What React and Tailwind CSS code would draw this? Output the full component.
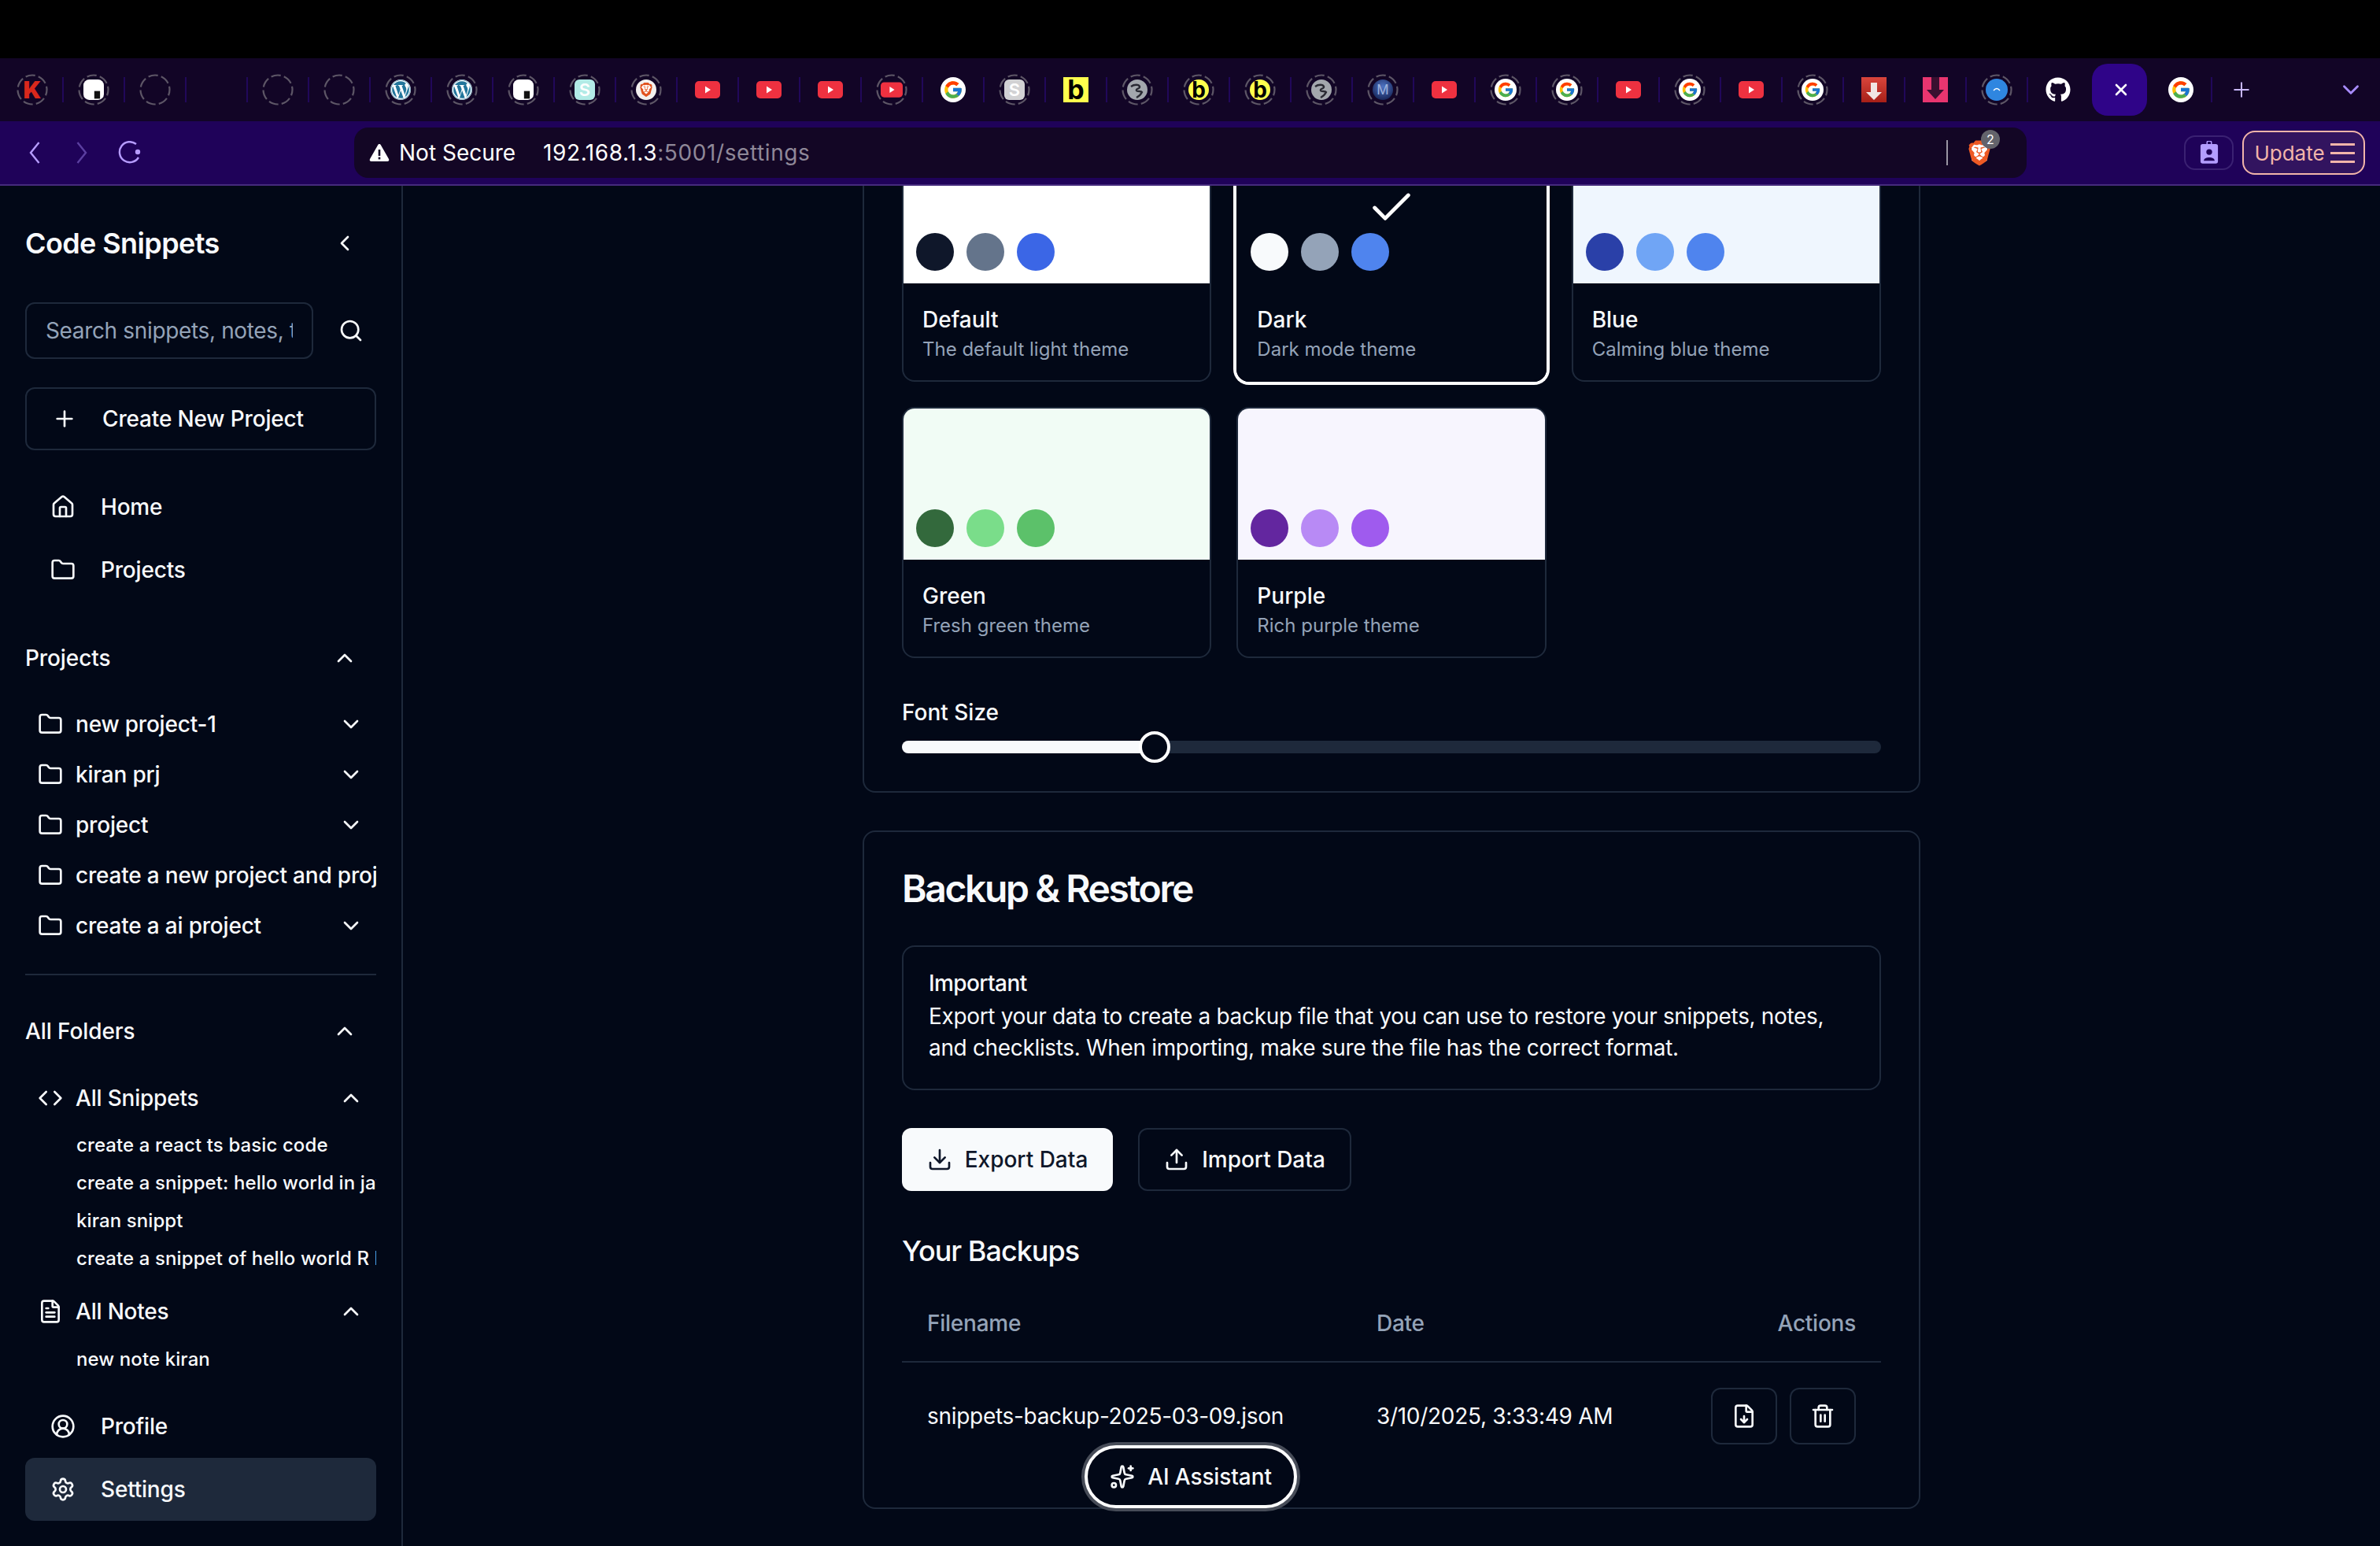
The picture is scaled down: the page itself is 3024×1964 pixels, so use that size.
import React from "react";
import {
  Check, ChevronDown, ChevronLeft, ChevronUp, CircleUserRound, Code, Download, FileDown,
  FileText, Folder, House, Plus, Search, Settings, Sparkles, Trash2, Upload, X,
} from "lucide-react";
import { FaGithub, FaWordpress } from "react-icons/fa";
import { FcGoogle } from "react-icons/fc";
import { SiBrave } from "react-icons/si";

const Ring = () => (
  <svg viewBox="0 0 40 40" className="absolute left-1/2 top-1/2 h-10 w-10 -translate-x-1/2 -translate-y-1/2">
    <circle cx="20" cy="20" r="18.5" fill="none" stroke="#5d5666" strokeWidth="2.2" strokeDasharray="12.4 4.2" strokeDashoffset="5" />
  </svg>
);

const Box = () => (
  <svg viewBox="0 0 32 32" className="h-[26px] w-[26px]">
    <rect x="0" y="0" width="32" height="32" rx="9" fill="#fff" />
    <rect x="17" y="18" width="9" height="12" fill="#111" />
  </svg>
);

const Letter = ({ cls, children }) => (
  <span className={`flex h-[26px] w-[26px] items-center justify-center leading-none ${cls}`}>{children}</span>
);

const Wp = () => (
  <span className="flex h-[26px] w-[26px] items-center justify-center rounded-full bg-white">
    <FaWordpress className="h-[26px] w-[26px] text-[#21759b]" />
  </span>
);

const Yt = ({ small }) => (
  <svg viewBox="0 0 32 32" className={small ? "h-[28px] w-[28px]" : "h-8 w-8"}>
    <rect x="0" y="5" width="32" height="22" rx="5" fill="#ee3140" />
    <path d="M13 11.5 L20 16 L13 20.5 Z" fill="#fff" />
  </svg>
);

const Goog = ({ small }) => (
  <span className={`flex items-center justify-center rounded-full bg-white ${small ? "h-[28px] w-[28px]" : "h-8 w-8"}`}>
    <FcGoogle className={small ? "h-[22px] w-[22px]" : "h-[26px] w-[26px]"} />
  </span>
);

const Globe = () => (
  <svg viewBox="0 0 26 26" className="h-[26px] w-[26px]">
    <circle cx="13" cy="13" r="13" fill="#a3a7ad" />
    <path d="M5 9 C9 6 15 6 16 9 C17 12 11 11 12 14 C13 16 18 14 19 16 C17 20 14 22 12 23" fill="none" stroke="#2a2a33" strokeWidth="2.4" />
  </svg>
);

const RedArrow = () => (
  <span className="flex h-8 w-8 items-center justify-center bg-gradient-to-b from-[#d9453c] to-[#a61f17]">
    <svg viewBox="0 0 32 32" className="h-8 w-8">
      <path d="M12 7 H20 V19 H26 L16 29 L6 19 H12 Z" fill="#f1e6e3" />
    </svg>
  </span>
);

const PinkArrow = () => (
  <svg viewBox="0 0 32 32" className="h-8 w-8">
    <rect width="32" height="32" fill="#e8356f" />
    <path d="M11 0 H21 V16 H27 L16 28 L5 16 H11 Z" fill="#3a1030" />
  </svg>
);

const Blue = () => (
  <svg viewBox="0 0 28 28" className="h-7 w-7">
    <circle cx="14" cy="14" r="14" fill="#2f86e0" />
    <path d="M10 15 Q14 10 18 15" fill="none" stroke="#fff" strokeWidth="1.4" />
  </svg>
);

const Lion = ({ cls }) => (
  <span className="relative flex items-center justify-center">
    <span className="absolute inset-[18%] rounded-[3px] bg-white" />
    <SiBrave className={`relative ${cls}`} />
  </span>
);

const tabs = [
  { ring: true, icon: <Letter cls="text-[30px] font-black text-[#d9281c]">K</Letter> },
  { ring: true, icon: <Box /> },
  { ring: true },
  {},
  { ring: true },
  { ring: true },
  { ring: true, icon: <Wp /> },
  { ring: true, icon: <Wp /> },
  { ring: true, icon: <Box /> },
  { ring: true, icon: <Letter cls="rounded-md bg-[#b2ebe6] text-[22px] font-semibold text-white">S</Letter> },
  { ring: true, icon: <Letter cls="rounded-full bg-[#f3f1ef]"><Lion cls="h-[18px] w-[18px] text-[#e2531f]" /></Letter> },
  { icon: <Yt /> },
  { icon: <Yt /> },
  { icon: <Yt /> },
  { ring: true, icon: <Yt small /> },
  { icon: <Goog /> },
  { ring: true, icon: <Letter cls="rounded-md bg-[#d2d2d4] text-[22px] font-semibold text-white">S</Letter> },
  { icon: <span className="flex h-8 w-8 items-center justify-center bg-[#ffff4d] text-[34px] font-bold leading-none text-black">b</span> },
  { ring: true, icon: <Globe /> },
  { ring: true, icon: <Letter cls="rounded-full bg-[#ffff4d] text-[28px] font-bold text-black">b</Letter> },
  { ring: true, icon: <Letter cls="rounded-full bg-[#ffff4d] text-[28px] font-bold text-black">b</Letter> },
  { ring: true, icon: <Globe /> },
  { ring: true, icon: <Letter cls="rounded-full bg-[radial-gradient(circle_at_50%_35%,#4f74c4,#0a1440)] text-[17px] text-[#9db2dd]">M</Letter> },
  { icon: <Yt /> },
  { ring: true, icon: <Goog small /> },
  { ring: true, icon: <Goog small /> },
  { icon: <Yt /> },
  { ring: true, icon: <Goog small /> },
  { icon: <Yt /> },
  { ring: true, icon: <Goog small /> },
  { icon: <RedArrow /> },
  { icon: <PinkArrow /> },
  { ring: true, icon: <Blue /> },
  { noSep: true, icon: <FaGithub className="h-8 w-8 text-white" /> },
  { noSep: true, active: true },
  { icon: <Goog /> },
];

const TabBar = () => (
  <div className="flex h-20 items-center bg-[#120526] pl-[3px]">
    {tabs.map((t, i) => (
      <div key={i} className={`relative flex h-8 w-[78px] shrink-0 items-center justify-center border-r-2 ${t.noSep ? "border-transparent" : "border-[#21085a]"}`}>
        {t.ring && <Ring />}
        {t.active && (
          <span className="absolute left-1/2 top-1/2 flex h-[66px] w-[70px] -translate-x-1/2 -translate-y-1/2 items-center justify-center rounded-[20px] bg-[#2f0488] pl-1">
            <X size={24} strokeWidth={2.6} className="text-white" />
          </span>
        )}
        <span className="relative flex items-center justify-center">{t.icon}</span>
      </div>
    ))}
    <Plus size={30} strokeWidth={1.6} className="ml-[22px] text-[#c9b8ff]" />
    <ChevronDown size={34} strokeWidth={2} className="ml-[107px] text-[#a88cff]" />
  </div>
);

const Toolbar = () => (
  <div className="flex h-[82px] items-center border-b-2 border-[#452a7c] bg-[#1f0259]">
    <div className="flex w-[450px] shrink-0 items-center">
      <svg viewBox="0 0 14 28" className="ml-[37px] h-7 w-[14px]">
        <path d="M12.5 1 L2 14 L12.5 27" fill="none" stroke="#b69cff" strokeWidth="2.4" />
      </svg>
      <svg viewBox="0 0 14 28" className="ml-[46px] h-7 w-[14px]">
        <path d="M1.5 1 L12 14 L1.5 27" fill="none" stroke="#5b3fa0" strokeWidth="2.4" />
      </svg>
      <svg viewBox="0 0 30 30" className="ml-[39px] h-[30px] w-[30px]">
        <path d="M23 4 A13 13 0 1 0 26 21" fill="none" stroke="#b69cff" strokeWidth="2.4" />
        <circle cx="25" cy="14" r="3.2" fill="#b69cff" />
      </svg>
    </div>
    <div className="flex h-16 w-[2125px] shrink-0 items-center rounded-[18px] bg-[#130625] pl-[19px] text-[28px]">
      <svg viewBox="0 0 26 24" className="h-6 w-[26px]">
        <path d="M13 1 C14 1 14.6 1.6 15 2.4 L25 20 C25.8 21.6 25 23 23.2 23 H2.8 C1 23 .2 21.6 1 20 L11 2.4 C11.4 1.6 12 1 13 1 Z" fill="#fff" />
        <rect x="11.7" y="8" width="2.6" height="8" fill="#130625" />
        <rect x="11.7" y="17.6" width="2.6" height="2.8" fill="#130625" />
      </svg>
      <span className="ml-3 w-[183px] text-white">Not Secure</span>
      <span className="tracking-[0.6px] text-white">192.168.1.3</span>
      <span className="tracking-[0.6px] text-[#8f8898]">:5001/settings</span>
      <span className="ml-auto h-8 w-[2px] bg-[#9a95a3]" />
      <span className="relative ml-[24px] mr-[44px] flex">
        <Lion cls="h-[35px] w-[32px] text-[#ee5a24]" />
        <span className="absolute -right-[10px] -top-[12px] flex h-6 w-6 items-center justify-center rounded-full bg-[#63636b] text-[16px] text-white">2</span>
      </span>
    </div>
    <span className="ml-[200px] flex h-[44px] w-[63px] items-center justify-center rounded-[14px] border-2 border-[#3a2172]">
      <svg viewBox="0 0 26 32" className="h-[30px] w-[24px]">
        <rect x="1" y="4" width="24" height="27" rx="3" fill="#b39dff" />
        <rect x="10" y="0" width="6" height="7" rx="2" fill="none" stroke="#b39dff" strokeWidth="1.6" />
        <circle cx="13" cy="15" r="4" fill="#1f0259" />
        <path d="M5.5 27 C6 21 20 21 20.5 27 Z" fill="#1f0259" />
      </svg>
    </span>
    <span className="ml-[11px] flex h-14 w-[156px] items-center justify-center gap-[7px] rounded-[16px] border-2 border-[#f2b5aa] bg-[#32145f] pl-[2px] text-[26px] text-[#f2b5aa]">
      Update
      <span className="flex w-[31px] flex-col gap-[8px]">
        <span className="h-[3px] bg-[#f2b5aa]" />
        <span className="h-[3px] bg-[#f2b5aa]" />
        <span className="h-[3px] bg-[#f2b5aa]" />
      </span>
    </span>
  </div>
);

const NavItem = ({ icon: Icon, label, active }) => (
  <div className={`flex h-20 items-center gap-8 rounded-[12px] px-8 text-[28px] font-medium tracking-[-0.2px] ${active ? "bg-[#1e293b]" : ""}`}>
    <Icon size={32} />
    {label}
  </div>
);

const SectionHead = ({ label, cls }) => (
  <div className={`flex h-10 items-center justify-between pr-6 text-[28px] font-medium tracking-[-0.1px] ${cls}`}>
    {label}
    <ChevronUp size={32} />
  </div>
);

const TreeRow = ({ icon: Icon, label, chevron: Chev }) => (
  <div className="flex h-16 items-center gap-4 px-4 text-[28px] font-medium tracking-[-0.2px]">
    <Icon size={32} className="shrink-0" />
    <span className="flex-1 overflow-hidden whitespace-nowrap">{label}</span>
    {Chev && <Chev size={32} className="shrink-0" />}
  </div>
);

const SubItem = ({ label }) => (
  <div className="h-12 overflow-hidden whitespace-nowrap pl-[65px] text-[24px] font-medium leading-[48px] tracking-[0.1px]">{label}</div>
);

const Sidebar = () => (
  <aside className="w-[512px] shrink-0 border-r-2 border-[#1e293b] px-8 pt-[45px]">
    <div className="flex h-14 items-center justify-between pr-6">
      <h1 className="text-[36px] font-semibold tracking-[-0.6px]">Code Snippets</h1>
      <ChevronLeft size={32} />
    </div>
    <div className="mt-[47px] flex items-center">
      <input
        readOnly
        placeholder="Search snippets, notes, todos..."
        className="h-[72px] w-[366px] rounded-[12px] border-2 border-[#1e293b] bg-transparent px-6 text-[28px] tracking-[-0.35px] outline-none placeholder:text-[#94a3b8]"
      />
      <Search size={32} className="ml-8" />
    </div>
    <div className="mt-9 flex h-20 items-center gap-8 rounded-[12px] border-2 border-[#1e293b] px-8 text-[28px] font-medium tracking-[-0.16px]">
      <Plus size={32} />
      Create New Project
    </div>
    <div className="mt-8">
      <NavItem icon={House} label="Home" />
      <NavItem icon={Folder} label="Projects" />
    </div>
    <SectionHead label="Projects" cls="mt-[52px]" />
    <div className="mt-[32px]">
      <TreeRow icon={Folder} label="new project-1" chevron={ChevronDown} />
      <TreeRow icon={Folder} label="kiran prj" chevron={ChevronDown} />
      <TreeRow icon={Folder} label="project" chevron={ChevronDown} />
      <div className="flex h-16 items-center gap-4 pl-4 text-[28px] font-medium tracking-[-0.2px]">
        <Folder size={32} className="shrink-0" />
        <span className="overflow-hidden whitespace-nowrap">create a new project and project</span>
      </div>
      <TreeRow icon={Folder} label="create a ai project" chevron={ChevronDown} />
    </div>
    <div className="mt-[29px] h-[2px] bg-[#1e293b]" />
    <SectionHead label="All Folders" cls="mt-[51px]" />
    <div className="mt-[33px]">
      <TreeRow icon={Code} label="All Snippets" chevron={ChevronUp} />
    </div>
    <div className="mt-1">
      <SubItem label="create a react ts basic code" />
      <SubItem label="create a snippet: hello world in java" />
      <SubItem label="kiran snippt" />
      <SubItem label="create a snippet of hello world R lang" />
    </div>
    <div className="mt-[11px]">
      <TreeRow icon={FileText} label="All Notes" chevron={ChevronUp} />
    </div>
    <div className="mt-[5px]">
      <SubItem label="new note kiran" />
    </div>
    <div className="mt-[21px]">
      <NavItem icon={CircleUserRound} label="Profile" />
      <NavItem icon={Settings} label="Settings" active />
    </div>
  </aside>
);

const ThemeCard = ({ name, desc, bg, dots, selected }) => (
  <div className={`overflow-hidden rounded-[16px] border-2 ${selected ? "border-[#020817] shadow-[0_0_0_4px_#fff]" : "border-[#1e293b]"}`}>
    <div className={`relative flex h-48 items-end gap-4 p-4 ${bg}`}>
      {dots.map((d) => (
        <span key={d} className="h-12 w-12 rounded-full" style={{ backgroundColor: d }} />
      ))}
      {selected && <Check size={64} strokeWidth={1.8} className="absolute left-1/2 top-1/2 -translate-x-1/2 -translate-y-1/2 text-white" />}
    </div>
    <div className="px-6 pb-[23px] pt-[26px]">
      <div className="text-[28px] font-medium leading-10">{name}</div>
      <div className="mt-[2px] text-[24px] leading-8 text-[#94a3b8]">{desc}</div>
    </div>
  </div>
);

const themes = [
  { name: "Default", desc: "The default light theme", bg: "bg-white", dots: ["#0f172a", "#64748b", "#3b66e6"] },
  { name: "Dark", desc: "Dark mode theme", bg: "bg-[#020817]", dots: ["#f8fafc", "#94a3b8", "#4f84ee"], selected: true },
  { name: "Blue", desc: "Calming blue theme", bg: "bg-[#eff6fe]", dots: ["#2a40a8", "#70a5f5", "#4f84ee"] },
  { name: "Green", desc: "Fresh green theme", bg: "bg-[#f1fcf5]", dots: ["#33693c", "#7add8a", "#5cc16a"] },
  { name: "Purple", desc: "Rich purple theme", bg: "bg-[#f7f5fe]", dots: ["#63269f", "#b88af5", "#9f5bee"] },
];

const Main = () => (
  <main className="relative flex-1 overflow-hidden">
    <div className="mx-auto w-[1344px]">
      <section className="-mt-[120px] rounded-[16px] border-2 border-[#1e293b] p-12">
        <div className="grid grid-cols-3 gap-8">
          {themes.map((t) => (
            <ThemeCard key={t.name} {...t} />
          ))}
        </div>
        <div className="mt-[49px] text-[28px] font-medium leading-10">Font Size</div>
        <div className="relative mt-4 h-4 rounded-full bg-[#1e293b]">
          <div className="h-4 w-[321px] rounded-full bg-[#f8fafc]" />
          <span className="absolute left-[301px] top-1/2 h-10 w-10 -translate-y-1/2 rounded-full border-4 border-white bg-[#020817]" />
        </div>
      </section>
      <section className="mt-12 rounded-[16px] border-2 border-[#1e293b] p-12">
        <h2 className="text-[48px] font-semibold leading-none tracking-[-2.4px]">Backup &amp; Restore</h2>
        <div className="mt-12 rounded-[16px] border-2 border-[#1e293b] p-8">
          <div className="mb-2 text-[28px] font-medium leading-none tracking-[-0.6px]">Important</div>
          <p className="text-[28px] leading-10 tracking-[-0.34px]">
            Export your data to create a backup file that you can use to restore your snippets, notes,
            <br />
            and checklists. When importing, make sure the file has the correct format.
          </p>
        </div>
        <div className="mt-12 flex gap-8">
          <button className="flex h-20 w-[268px] items-center justify-center gap-4 rounded-[12px] bg-[#f8fafc] text-[28px] font-medium text-[#0f172a]">
            <Download size={32} />
            Export Data
          </button>
          <button className="flex h-20 w-[271px] items-center justify-center gap-4 rounded-[12px] border-2 border-[#1e293b] text-[28px] font-medium">
            <Upload size={32} />
            Import Data
          </button>
        </div>
        <h3 className="mt-12 text-[36px] font-medium leading-14 tracking-[-1px]">Your Backups</h3>
        <div className="mt-4">
          <div className="flex h-[98px] items-center border-b-2 border-[#1e293b] px-8 text-[28px] font-medium tracking-[-0.25px] text-[#94a3b8]">
            <span className="w-[571px]">Filename</span>
            <span className="flex-1">Date</span>
            <span>Actions</span>
          </div>
          <div className="flex h-[136px] items-center px-8 text-[28px] tracking-[-0.3px]">
            <span className="w-[571px]">snippets-backup-2025-03-09.json</span>
            <span className="flex-1">3/10/2025, 3:33:49 AM</span>
            <div className="flex gap-4">
              <span className="flex h-[72px] w-[84px] items-center justify-center rounded-[12px] border-2 border-[#1e293b]">
                <FileDown size={32} />
              </span>
              <span className="flex h-[72px] w-[84px] items-center justify-center rounded-[12px] border-2 border-[#1e293b]">
                <Trash2 size={32} />
              </span>
            </div>
          </div>
        </div>
      </section>
    </div>
    <button className="absolute left-[866px] top-[1600px] flex h-20 w-[270px] items-center justify-center gap-4 rounded-full border-4 border-white bg-[#020817] text-[28px] font-medium tracking-[-0.1px] shadow-[0_0_0_4px_#474c58]">
      <Sparkles size={32} />
      AI Assistant
    </button>
  </main>
);

export default function App() {
  return (
    <div className="flex h-[1964px] w-[3024px] flex-col overflow-hidden bg-[#020817] text-[#f8fafc] [font-family:Inter,sans-serif]">
      <div className="h-[74px] shrink-0 bg-black" />
      <TabBar />
      <Toolbar />
      <div className="flex min-h-0 flex-1">
        <Sidebar />
        <Main />
      </div>
    </div>
  );
}
